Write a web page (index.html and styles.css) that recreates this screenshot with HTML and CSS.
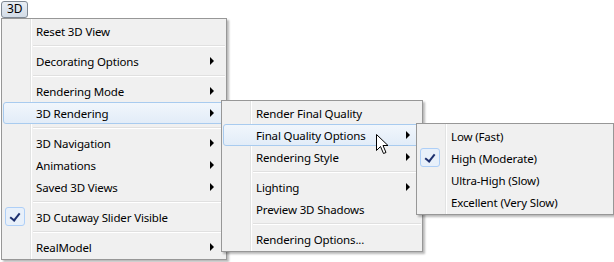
FILE: index.html
```html
<!DOCTYPE html>
<html lang="en">

<head>
    <meta charset="UTF-8">
    <title>3D Menu</title>
    <link rel="stylesheet" href="styles.css">
</head>

<body>
    <div class="screen">
        <div class="menubar">
            <span class="menubar-btn">3D</span>
        </div>

        <div class="menu menu-main">
            <div class="item">Reset 3D View</div>
            <div class="sep"></div>
            <div class="item sub">Decorating Options</div>
            <div class="sep"></div>
            <div class="item sub">Rendering Mode</div>
            <div class="item sub active">3D Rendering</div>
            <div class="sep"></div>
            <div class="item sub">3D Navigation</div>
            <div class="item sub">Animations</div>
            <div class="item sub">Saved 3D Views</div>
            <div class="sep"></div>
            <div class="item checked">3D Cutaway Slider Visible</div>
            <div class="sep"></div>
            <div class="item sub">RealModel</div>
        </div>

        <div class="menu menu-render">
            <div class="item">Render Final Quality</div>
            <div class="item sub active">Final Quality Options</div>
            <div class="item sub">Rendering Style</div>
            <div class="sep"></div>
            <div class="item sub">Lighting</div>
            <div class="item">Preview 3D Shadows</div>
            <div class="sep"></div>
            <div class="item">Rendering Options...</div>
        </div>

        <div class="menu menu-quality">
            <div class="item">Low (Fast)</div>
            <div class="item checked">High (Moderate)</div>
            <div class="item">Ultra-High (Slow)</div>
            <div class="item">Excellent (Very Slow)</div>
        </div>

        <svg class="cursor" width="13" height="21" viewBox="0 0 13 21">
            <path d="M0.5 0.5 L0.5 16.5 L4.5 12.5 L7.5 19.5 L10 18.5 L7 11.5 L12 11.5 Z" fill="#fff" stroke="#000" stroke-width="1" stroke-linejoin="miter"/>
        </svg>
    </div>
</body>

</html>
```

FILE: styles.css
```css
body {
    margin: 0;
    background: #fff;
    font-family: "Segoe UI", "Noto Sans", sans-serif;
    font-size: 11.5px;
    letter-spacing: -0.15px;
    color: #000;
}

.screen {
    position: relative;
    width: 614px;
    height: 262px;
    overflow: hidden;
}

.menubar {
    padding: 1px 0 0 1px;
}

.menubar-btn {
    display: inline-block;
    height: 15px;
    line-height: 14px;
    padding: 0 5px;
    border: 1px solid #7f8893;
    border-radius: 3px;
    font-size: 12px;
    background: linear-gradient(#e9eef4, #d3dce7);
}

.menu {
    position: absolute;
    box-sizing: border-box;
    padding: 1px;
    border: 1px solid #979797;
    background: linear-gradient(to right, #f0f0f0 28px, #e2e3e3 28px, #e2e3e3 29px, #fff 29px, #fff 30px, #f0f0f0 30px);
    box-shadow: 2px 2px 2px rgba(0, 0, 0, 0.28);
}

.menu-main {
    left: 1px;
    top: 18px;
    width: 226px;
}

.menu-render {
    left: 221px;
    top: 100px;
    width: 202px;
}

.menu-quality {
    left: 416px;
    top: 123px;
    width: 198px;
}

.item {
    position: relative;
    box-sizing: border-box;
    display: flex;
    align-items: center;
    height: 22px;
    padding-left: 32px;
    border: 1px solid transparent;
    border-radius: 3px;
    white-space: nowrap;
}

.item.sub::after {
    content: "";
    position: absolute;
    right: 10px;
    top: 6px;
    border-style: solid;
    border-width: 4px 0 4px 4px;
    border-color: transparent transparent transparent #000;
}

.item.active {
    border-color: #a8cbef;
    background: linear-gradient(#f1f6fc, #e2ecf8);
}

.item.checked::before {
    content: "";
    position: absolute;
    left: 1px;
    top: 0;
    width: 20px;
    height: 19px;
    box-sizing: border-box;
    border: 1px solid #aecff7;
    border-radius: 3px;
    background: #e8f0fa;
}

.item.checked::after {
    content: "";
    position: absolute;
    left: 8px;
    top: 4px;
    width: 4px;
    height: 8px;
    border: solid #1c2f6e;
    border-width: 0 2px 2px 0;
    transform: rotate(38deg);
}

.sep {
    height: 8px;
    margin-left: 30px;
    background: linear-gradient(transparent 3px, #e0e0e0 3px, #e0e0e0 4px, #fff 4px, #fff 5px, transparent 5px);
}

.cursor {
    position: absolute;
    left: 376px;
    top: 134px;
}
```
